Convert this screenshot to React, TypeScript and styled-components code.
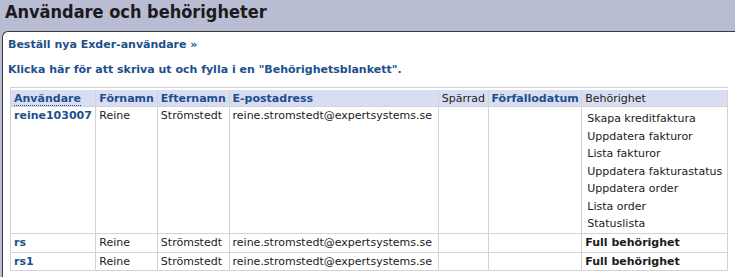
import React from "react";
import styled, { createGlobalStyle } from "styled-components";

const Global = createGlobalStyle`
  html, body { margin: 0; padding: 0; }
  body {
    background: #b8bdd3;
    font-family: "DejaVu Sans", Verdana, sans-serif;
    font-size: 11px;
    color: #222;
    overflow: hidden;
  }
`;

const Page = styled.div`
  width: 735px;
  height: 277px;
  display: flex;
  flex-direction: column;
`;

const Title = styled.h1`
  margin: 0;
  height: 31px;
  padding: 1px 0 0 5px;
  box-sizing: border-box;
  font-family: "DejaVu Sans Condensed", "DejaVu Sans", sans-serif;
  font-stretch: condensed;
  font-size: 18px;
  font-weight: bold;
  line-height: 22px;
  color: #1b1b1b;
`;

const Panel = styled.div`
  flex: 1;
  margin-left: 2px;
  background: #fff;
  border-top: 1px solid #3a3a3a;
  border-left: 1px solid #3a3a3a;
  border-top-left-radius: 6px;
  padding: 6px 7px 0 5px;
`;

const LinkLine = styled.a`
  display: block;
  color: #1d4f8c;
  font-weight: bold;
  text-decoration: none;
  line-height: 14px;
  margin: 0 0 11px 0;
  &:last-of-type {
    margin-bottom: 10px;
  }
`;

const Table = styled.table`
  border-collapse: separate;
  border-spacing: 0;
  margin-left: 2px;
  width: 718px;
  border-top: 1px solid #d3d3d3;
  border-left: 1px solid #d3d3d3;
  padding-top: 2px;
`;

const HeadRow = styled.tr`
  background: #d9ddf1;
`;

const Th = styled.th<{ $w: number; $plain?: boolean }>`
  width: ${(p) => p.$w}px;
  text-align: left;
  padding: 1px 2px 0 3px;
  line-height: 15px;
  white-space: nowrap;
  font-weight: ${(p) => (p.$plain ? "normal" : "bold")};
  color: ${(p) => (p.$plain ? "#222" : "#1d4f8c")};
  border-right: 1px solid #d3d3d3;
  border-bottom: 1px solid #d3d3d3;
`;

const SortLink = styled.span`
  border-bottom: 1px dotted #1d4f8c;
`;

const Td = styled.td<{ $user?: boolean; $bold?: boolean }>`
  vertical-align: top;
  padding: 1px 2px 0.5px 3px;
  line-height: 16px;
  white-space: nowrap;
  border-right: 1px solid #d3d3d3;
  border-bottom: 1px solid #d3d3d3;
  font-weight: ${(p) => (p.$user || p.$bold ? "bold" : "normal")};
  color: ${(p) => (p.$user ? "#1d4f8c" : "#1b1b1b")};
`;

const PermList = styled.ul`
  list-style: none;
  margin: 2px 0 0 2px;
  padding: 0;
`;

const Perm = styled.li`
  line-height: 17.5px;
  color: #1b1b1b;
`;

const perms = [
  "Skapa kreditfaktura",
  "Uppdatera fakturor",
  "Lista fakturor",
  "Uppdatera fakturastatus",
  "Uppdatera order",
  "Lista order",
  "Statuslista",
];

const users = [
  { id: "reine103007", list: true },
  { id: "rs", list: false },
  { id: "rs1", list: false },
];

export default function App() {
  return (
    <Page>
      <Global />
      <Title>Användare och behörigheter</Title>
      <Panel>
        <LinkLine href="#">Beställ nya Exder-användare »</LinkLine>
        <LinkLine href="#">Klicka här för att skriva ut och fylla i en "Behörighetsblankett".</LinkLine>
        <Table>
          <thead>
            <HeadRow>
              <Th $w={80}><SortLink>Användare</SortLink></Th>
              <Th $w={56}>Förnamn</Th>
              <Th $w={66}>Efternamn</Th>
              <Th $w={205}>E-postadress</Th>
              <Th $w={44} $plain>Spärrad</Th>
              <Th $w={88}>Förfallodatum</Th>
              <Th $w={141} $plain>Behörighet</Th>
            </HeadRow>
          </thead>
          <tbody>
            {users.map((u) => (
              <tr key={u.id}>
                <Td $user>{u.id}</Td>
                <Td>Reine</Td>
                <Td>Strömstedt</Td>
                <Td>reine.stromstedt@expertsystems.se</Td>
                <Td></Td>
                <Td></Td>
                {u.list ? (
                  <Td>
                    <PermList>
                      {perms.map((p) => (
                        <Perm key={p}>{p}</Perm>
                      ))}
                    </PermList>
                  </Td>
                ) : (
                  <Td $bold>Full behörighet</Td>
                )}
              </tr>
            ))}
          </tbody>
        </Table>
      </Panel>
    </Page>
  );
}
